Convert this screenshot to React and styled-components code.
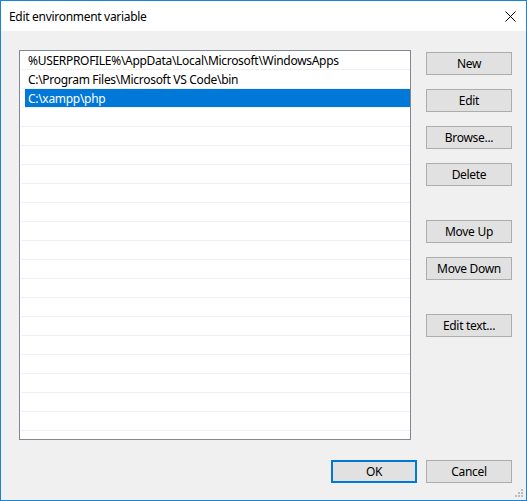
import React from "react";
import styled, { createGlobalStyle } from "styled-components";

const GlobalStyle = createGlobalStyle`
  html, body { margin: 0; padding: 0; background: #f0f0f0; }
  * { box-sizing: border-box; }
`;

const FONT = `"Segoe UI", "Noto Sans", "Liberation Sans", sans-serif`;

const Window = styled.div`
  position: relative;
  width: 527px;
  height: 501px;
  border: 1px solid #1883d7;
  background: #f0f0f0;
  font-family: ${FONT};
  font-size: 12px;
  letter-spacing: -0.3px;
  color: #000;
  display: flex;
  flex-direction: column;
  overflow: hidden;
`;

const TitleBar = styled.div`
  height: 30px;
  flex: none;
  background: #fff;
  display: flex;
  align-items: center;
  padding-left: 8px;
`;

const Title = styled.div`
  flex: 1;
  font-size: 12px;
  line-height: 16px;
  padding-top: 1px;
`;

const CloseButton = styled.div`
  width: 32px;
  height: 30px;
  display: flex;
  align-items: center;
  justify-content: center;
`;

const Body = styled.div`
  flex: 1;
  display: flex;
  flex-direction: column;
  padding: 19px 14px 0 18px;
`;

const MainRow = styled.div`
  display: flex;
  gap: 15px;
`;

const List = styled.div`
  width: 392px;
  height: 390px;
  flex: none;
  background: #fff;
  border: 1px solid #828790;
  padding: 0 0 0 1px;
  overflow: hidden;
`;

const Row = styled.div`
  height: 19px;
  border-bottom: 1px solid #f0f0f0;
  display: flex;
  overflow: hidden;
`;

const RowItem = styled.div`
  flex: 1;
  margin-left: 4px;
  padding: 1px 0 0 3px;
  line-height: 17px;
  white-space: nowrap;
  background: ${(p) => (p.$selected ? "#0078d7" : "transparent")};
  color: ${(p) => (p.$selected ? "#fff" : "#000")};
`;

const ButtonColumn = styled.div`
  display: flex;
  flex-direction: column;
  padding-top: 2px;
`;

const Button = styled.div`
  width: 86px;
  height: 23px;
  flex: none;
  margin-top: ${(p) => p.$gap || 0}px;
  background: #e1e1e1;
  border: ${(p) => (p.$default ? "2px solid #0078d7" : "1px solid #adadad")};
  display: flex;
  align-items: center;
  justify-content: center;
  font-size: 12px;
  line-height: 16px;
`;

const Footer = styled.div`
  display: flex;
  justify-content: flex-end;
  gap: 9px;
  margin-top: 20px;
`;

const Grip = styled.svg`
  position: absolute;
  right: 2px;
  bottom: 2px;
`;

const items = [
  "%USERPROFILE%\\AppData\\Local\\Microsoft\\WindowsApps",
  "C:\\Program Files\\Microsoft VS Code\\bin",
  "C:\\xampp\\php",
];

export default function App() {
  const rows = Array.from({ length: 21 }, (_, i) => items[i] || "");
  return (
    <>
      <GlobalStyle />
      <Window>
        <TitleBar>
          <Title>Edit environment variable</Title>
          <CloseButton>
            <svg width="11" height="11" viewBox="0 0 11 11">
              <path d="M0.5 0.5 L10.5 10.5 M10.5 0.5 L0.5 10.5" stroke="#000" strokeWidth="1" fill="none" />
            </svg>
          </CloseButton>
        </TitleBar>
        <Body>
          <MainRow>
            <List>
              {rows.map((t, i) => (
                <Row key={i}>
                  <RowItem $selected={i === 2}>{t}</RowItem>
                </Row>
              ))}
            </List>
            <ButtonColumn>
              <Button>New</Button>
              <Button $gap={14}>Edit</Button>
              <Button $gap={14}>Browse...</Button>
              <Button $gap={14}>Delete</Button>
              <Button $gap={34}>Move Up</Button>
              <Button $gap={14}>Move Down</Button>
              <Button $gap={34}>Edit text...</Button>
            </ButtonColumn>
          </MainRow>
          <Footer>
            <Button $default>OK</Button>
            <Button>Cancel</Button>
          </Footer>
        </Body>
        <Grip width="9" height="9" viewBox="0 0 9 9">
          <g fill="#bcbcbc">
            <rect x="6" y="0" width="2" height="2" />
            <rect x="3" y="3" width="2" height="2" />
            <rect x="6" y="3" width="2" height="2" />
            <rect x="0" y="6" width="2" height="2" />
            <rect x="3" y="6" width="2" height="2" />
            <rect x="6" y="6" width="2" height="2" />
          </g>
        </Grip>
      </Window>
    </>
  );
}
